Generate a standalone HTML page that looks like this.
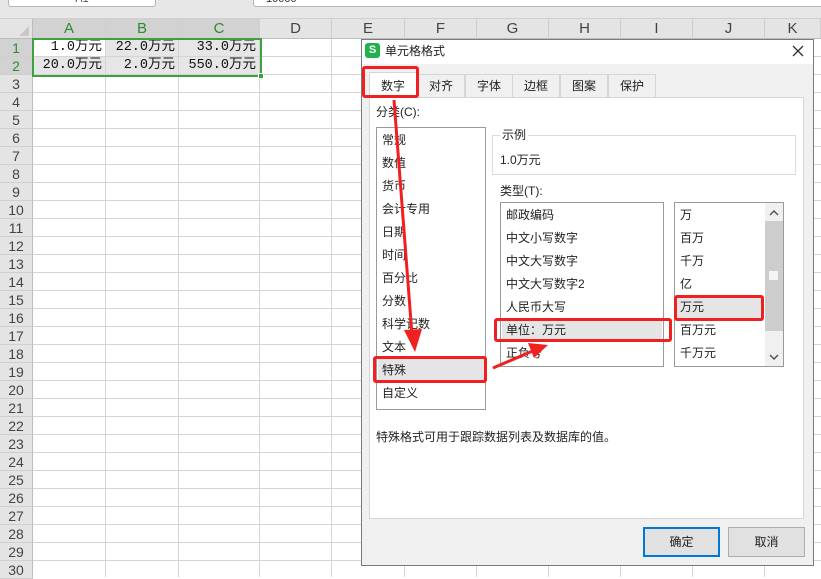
<!DOCTYPE html>
<html><head><meta charset="utf-8"><style>
*{margin:0;padding:0;box-sizing:border-box}
body{width:821px;height:577px;overflow:hidden;background:#fff;position:relative;font-family:"Liberation Sans","Noto Sans CJK SC",sans-serif;font-size:12px;color:#222}
.a{position:absolute}
.rh{position:absolute;left:0;width:33px;height:18px;background:#e4e4e4;border-bottom:1px solid #cfcfcf;border-right:1px solid #bdbdbd;text-align:center;font-size:14px;line-height:18px;color:#444}
.ch{position:absolute;top:19px;height:20px;background:#e4e4e4;border-right:1px solid #cfcfcf;border-bottom:1px solid #bdbdbd;text-align:center;font-size:15px;line-height:20px;color:#444}
.cell{position:absolute;height:17px;text-align:right;font-family:"Liberation Mono","Noto Sans CJK SC",monospace;font-size:13.5px;line-height:18px;padding-right:3px;color:#111;background:#e6e6e6;white-space:nowrap}
.li{position:absolute;left:5px;font-size:12px;line-height:23px;height:23px}
.tab{position:absolute;top:74px;height:23px;width:48px;border:1px solid #d6d6d6;border-bottom:none;background:#f0f0f0;text-align:center;line-height:23px;font-size:12px}
.red{position:absolute;border:3px solid #f02020;border-radius:3px}
.btn{position:absolute;top:527px;height:30px;width:77px;background:#e1e1e1;border:1px solid #adadad;text-align:center;line-height:28px;font-size:12px}
</style></head><body>
<div class="a" style="left:0;top:0;width:821px;height:19px;background:#e7e7e7;border-bottom:1px solid #d0d0d0"></div>
<div class="a" style="left:8px;top:-8px;width:148px;height:15px;background:#fff;border:1px solid #b5b5b5;border-radius:3px;font-size:11px;text-align:center;color:#555;line-height:12px">A1</div>
<div class="a" style="left:253px;top:-8px;width:580px;height:15px;background:#fff;border:1px solid #b5b5b5;border-radius:3px;font-size:11px;padding-left:12px;color:#333;line-height:12px">10000</div>
<div class="a" style="left:0;top:19px;width:33px;height:20px;background:#e4e4e4;border-right:1px solid #bdbdbd;border-bottom:1px solid #bdbdbd"></div>
<div class="a" style="left:19px;top:26px;width:0;height:0;border-left:10px solid transparent;border-bottom:10px solid #c8c8c8"></div>
<div class="a" style="left:33px;top:39px;width:788px;height:538px;background-image:repeating-linear-gradient(to bottom,transparent 0,transparent 17px,#d4d4d4 17px,#d4d4d4 18px)"></div>
<div class="ch" style="left:33px;width:73px;background:#d2d2d2;color:#2e8b2e">A</div>
<div class="ch" style="left:106px;width:73px;background:#d2d2d2;color:#2e8b2e">B</div>
<div class="ch" style="left:179px;width:81px;background:#d2d2d2;color:#2e8b2e">C</div>
<div class="ch" style="left:260px;width:72px">D</div>
<div class="ch" style="left:332px;width:73px">E</div>
<div class="ch" style="left:405px;width:72px">F</div>
<div class="ch" style="left:477px;width:72px">G</div>
<div class="ch" style="left:549px;width:72px">H</div>
<div class="ch" style="left:621px;width:72px">I</div>
<div class="ch" style="left:693px;width:72px">J</div>
<div class="ch" style="left:765px;width:56px">K</div>
<div class="a" style="left:105px;top:39px;width:1px;height:538px;background:#d4d4d4"></div>
<div class="a" style="left:178px;top:39px;width:1px;height:538px;background:#d4d4d4"></div>
<div class="a" style="left:259px;top:39px;width:1px;height:538px;background:#d4d4d4"></div>
<div class="a" style="left:331px;top:39px;width:1px;height:538px;background:#d4d4d4"></div>
<div class="a" style="left:404px;top:39px;width:1px;height:538px;background:#d4d4d4"></div>
<div class="a" style="left:476px;top:39px;width:1px;height:538px;background:#d4d4d4"></div>
<div class="a" style="left:548px;top:39px;width:1px;height:538px;background:#d4d4d4"></div>
<div class="a" style="left:620px;top:39px;width:1px;height:538px;background:#d4d4d4"></div>
<div class="a" style="left:692px;top:39px;width:1px;height:538px;background:#d4d4d4"></div>
<div class="a" style="left:764px;top:39px;width:1px;height:538px;background:#d4d4d4"></div>
<div>
<div class="rh" style="top:39px;background:#d2d2d2;color:#2e8b2e">1</div>
<div class="rh" style="top:57px;background:#d2d2d2;color:#2e8b2e">2</div>
<div class="rh" style="top:75px">3</div><div class="rh" style="top:93px">4</div><div class="rh" style="top:111px">5</div><div class="rh" style="top:129px">6</div><div class="rh" style="top:147px">7</div><div class="rh" style="top:165px">8</div><div class="rh" style="top:183px">9</div><div class="rh" style="top:201px">10</div><div class="rh" style="top:219px">11</div><div class="rh" style="top:237px">12</div><div class="rh" style="top:255px">13</div><div class="rh" style="top:273px">14</div><div class="rh" style="top:291px">15</div><div class="rh" style="top:309px">16</div><div class="rh" style="top:327px">17</div><div class="rh" style="top:345px">18</div><div class="rh" style="top:363px">19</div><div class="rh" style="top:381px">20</div><div class="rh" style="top:399px">21</div><div class="rh" style="top:417px">22</div><div class="rh" style="top:435px">23</div><div class="rh" style="top:453px">24</div><div class="rh" style="top:471px">25</div><div class="rh" style="top:489px">26</div><div class="rh" style="top:507px">27</div><div class="rh" style="top:525px">28</div><div class="rh" style="top:543px">29</div><div class="rh" style="top:561px">30</div>
</div>
<div class="cell" style="left:34px;top:39px;width:71px;background:#fff">1.0万元</div>
<div class="cell" style="left:106px;top:39px;width:72px">22.0万元</div>
<div class="cell" style="left:179px;top:39px;width:80px">33.0万元</div>
<div class="cell" style="left:34px;top:57px;width:71px">20.0万元</div>
<div class="cell" style="left:106px;top:57px;width:72px">2.0万元</div>
<div class="cell" style="left:179px;top:57px;width:80px">550.0万元</div>
<div class="a" style="left:32px;top:38px;width:230px;height:39px;border:2px solid #3ea03e"></div>
<div class="a" style="left:258px;top:73px;width:6px;height:6px;background:#3ea03e;border:1px solid #fff"></div>
<div class="a" style="left:361px;top:39px;width:453px;height:527px;background:#f0f0f0;border:1px solid #7a7a7a"></div>
<div class="a" style="left:362px;top:40px;width:451px;height:24px;background:#fff"></div>
<div class="a" style="left:365px;top:43px;width:15px;height:15px;background:#22b14c;border-radius:3px;color:#fff;font-size:11px;font-weight:bold;text-align:center;line-height:15px">S</div>
<div class="a" style="left:385px;top:43px;font-size:12px;line-height:16px">单元格格式</div>
<svg class="a" style="left:792px;top:45px" width="12" height="12"><path d="M1 1L11 11M11 1L1 11" stroke="#333" stroke-width="1.3"/></svg>
<div class="a" style="left:369px;top:97px;width:435px;height:422px;background:#fff;border:1px solid #d6d6d6"></div>
<div class="tab" style="left:369px;top:72px;height:26px;background:#fff;line-height:26px">数字</div>
<div class="tab" style="left:417px">对齐</div>
<div class="tab" style="left:465px">字体</div>
<div class="tab" style="left:512px">边框</div>
<div class="tab" style="left:560px">图案</div>
<div class="tab" style="left:608px">保护</div>
<div class="a" style="left:376px;top:104px;line-height:16px">分类(C):</div>
<div class="a" style="left:376px;top:127px;width:110px;height:283px;border:1px solid #9a9a9a;background:#fff">
<div class="li" style="top:1px">常规</div><div class="li" style="top:24px">数值</div><div class="li" style="top:47px">货币</div><div class="li" style="top:70px">会计专用</div><div class="li" style="top:93px">日期</div><div class="li" style="top:116px">时间</div><div class="li" style="top:139px">百分比</div><div class="li" style="top:162px">分数</div><div class="li" style="top:185px">科学记数</div><div class="li" style="top:208px">文本</div>
<div class="a" style="left:1px;top:231px;width:106px;height:22px;background:#e5e5e5"></div>
<div class="li" style="top:231px">特殊</div><div class="li" style="top:254px">自定义</div>
</div>
<div class="a" style="left:492px;top:135px;width:304px;height:40px;border:1px solid #dcdcdc"></div>
<div class="a" style="left:500px;top:127px;background:#fff;padding:0 2px;line-height:16px">示例</div>
<div class="a" style="left:500px;top:152px;line-height:16px">1.0万元</div>
<div class="a" style="left:500px;top:183px;line-height:16px">类型(T):</div>
<div class="a" style="left:500px;top:202px;width:164px;height:165px;border:1px solid #9a9a9a;background:#fff;overflow:hidden">
<div class="li" style="top:1px">邮政编码</div><div class="li" style="top:24px">中文小写数字</div><div class="li" style="top:47px">中文大写数字</div><div class="li" style="top:70px">中文大写数字2</div><div class="li" style="top:93px">人民币大写</div>
<div class="a" style="left:1px;top:116px;width:160px;height:22px;background:#e5e5e5"></div>
<div class="li" style="top:116px">单位：万元</div><div class="li" style="top:139px">正负号</div>
</div>
<div class="a" style="left:674px;top:202px;width:110px;height:165px;border:1px solid #9a9a9a;background:#fff;overflow:hidden">
<div class="li" style="top:1px">万</div><div class="li" style="top:24px">百万</div><div class="li" style="top:47px">千万</div><div class="li" style="top:70px">亿</div>
<div class="a" style="left:1px;top:93px;width:88px;height:22px;background:#e5e5e5"></div>
<div class="li" style="top:93px">万元</div><div class="li" style="top:116px">百万元</div><div class="li" style="top:139px">千万元</div>
<div class="a" style="left:90px;top:0;width:18px;height:163px;background:#f0f0f0"></div>
<div class="a" style="left:90px;top:18px;width:18px;height:110px;background:#cdcdcd"></div>
<div class="a" style="left:94px;top:68px;width:9px;height:9px;background:#f4f4f4"></div>
<svg class="a" style="left:94px;top:7px" width="10" height="6"><path d="M1 5L5 1L9 5" stroke="#555" stroke-width="1.5" fill="none"/></svg>
<svg class="a" style="left:94px;top:151px" width="10" height="6"><path d="M1 1L5 5L9 1" stroke="#555" stroke-width="1.5" fill="none"/></svg>
</div>
<div class="a" style="left:376px;top:429px;line-height:16px">特殊格式可用于跟踪数据列表及数据库的值。</div>
<div class="btn" style="left:643px;border:2px solid #0078d7;line-height:26px">确定</div>
<div class="btn" style="left:728px">取消</div>
<div class="red" style="left:362px;top:66px;width:57px;height:32px"></div>
<div class="red" style="left:373px;top:356px;width:114px;height:27px"></div>
<div class="red" style="left:494px;top:318px;width:178px;height:24px"></div>
<div class="red" style="left:674px;top:295px;width:90px;height:26px"></div>
<svg class="a" style="left:0;top:0" width="821" height="577">
<line x1="394" y1="100" x2="412" y2="335" stroke="#f02020" stroke-width="3"/>
<polygon points="404,330 422,329 415,352" fill="#f02020"/>
<line x1="493" y1="368" x2="535" y2="350" stroke="#f02020" stroke-width="3"/>
<polygon points="528,343 548,345 534,358" fill="#f02020"/>
</svg>
</body></html>
